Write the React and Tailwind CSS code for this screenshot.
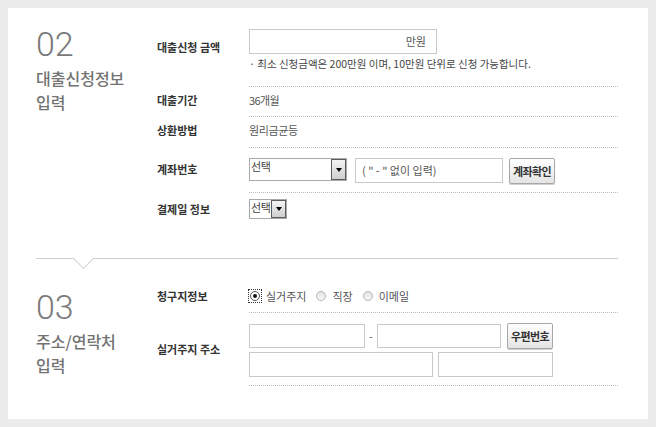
import React from "react";

const ko = { fontFamily: '"Noto Sans CJK KR", "Noto Sans", sans-serif' };
const num = { fontFamily: 'Roboto, "Liberation Sans", sans-serif' };

function Select({ w, h, className = "" }) {
  return (
    <div className={`relative flex bg-white border border-[#a9a9a9] ${className}`} style={{ width: w, height: h }}>
      <span className="pl-[1px] leading-[14px] text-[11px] tracking-[-0.3px] text-[#444]">선택</span>
      <span className="absolute right-0 top-0 bottom-0 w-[15px] flex items-center justify-center border border-[#5c5c5c] bg-gradient-to-b from-[#f4f4f4] to-[#cfcfcf]">
        <span className="w-0 h-0 border-l-[3px] border-r-[3px] border-t-[4px] border-l-transparent border-r-transparent border-t-black" />
      </span>
    </div>
  );
}

function Btn({ children, w, h }) {
  return (
    <button
      className="flex items-center justify-center rounded-[2px] border border-[#a7a7a7] bg-gradient-to-b from-white to-[#e4e4e4] text-[11px] font-bold tracking-[-0.6px] text-[#333] shadow-[0_1px_0_#d0d0d0]"
      style={{ width: w, height: h }}
    >
      {children}
    </button>
  );
}

function Radio({ checked }) {
  return (
    <span className={`flex items-center justify-center w-[12px] h-[12px] ${checked ? "outline outline-1 outline-dotted outline-[#333]" : ""}`}>
      <span className={`flex items-center justify-center w-[10px] h-[10px] rounded-full border ${checked ? "border-[#555] bg-white" : "border-[#b5b5b5] bg-gradient-to-b from-[#e2e2e2] to-[#f8f8f8]"}`}>
        {checked && <span className="w-[4px] h-[4px] rounded-full bg-[#111]" />}
      </span>
    </span>
  );
}

const Label = ({ children, className = "" }) => (
  <div className={`text-[11px] font-bold leading-[14px] text-[#333] ${className}`}>{children}</div>
);

const Cell = ({ children, className = "", last }) => (
  <div className={`${last ? "" : "border-b border-dotted border-[#bdbdbd]"} ${className}`}>{children}</div>
);

function Heading({ n, lines }) {
  return (
    <div className="w-[121px] shrink-0">
      <div className="text-[34px] font-light leading-[32px] text-[#7a7a7a]" style={num}>{n}</div>
      <div className="mt-[6px] text-[16px] font-medium leading-[24px] text-[#727272]">
        {lines.map(l => <div key={l}>{l}</div>)}
      </div>
    </div>
  );
}

export default function App() {
  return (
    <div className="w-[656px] h-[427px] bg-[#ececec] p-[8px]" style={ko}>
      <div className="h-[411px] bg-white pl-[28px] pr-[30px]">
        {/* 02 */}
        <div className="flex pt-[20px]">
          <Heading n="02" lines={["대출신청정보", "입력"]} />
          <div className="flex-1 grid grid-cols-[92px_1fr] mt-[1px]">
            <Label className="pt-[11px]">대출신청 금액</Label>
            <Cell className="pb-[15px]">
              <div className="w-[188px] h-[25px] border border-[#c9c9c9] flex items-center justify-end pr-[10px] text-[11px] text-[#555]">만원</div>
              <div className="mt-[3px] text-[10.5px] leading-[14px] text-[#444]">· 최소 신청금액은 200만원 이며, 10만원 단위로 신청 가능합니다.</div>
            </Cell>

            <Label className="pt-[6px]">대출기간</Label>
            <Cell className="pt-[6px] pb-[9px]">
              <div className="text-[11px] leading-[14px] tracking-[-0.6px] text-[#555]">36개월</div>
            </Cell>

            <Label className="pt-[6px]">상환방법</Label>
            <Cell className="pt-[6px] pb-[10px]">
              <div className="text-[11px] leading-[14px] tracking-[-0.4px] text-[#555]">원리금균등</div>
            </Cell>

            <Label className="pt-[14px]">계좌번호</Label>
            <Cell className="pt-[10px] pb-[8px]">
              <div className="flex items-start">
                <Select w={98} h={23} />
                <div className="ml-[8px] w-[148px] h-[25px] border border-[#c9c9c9] flex items-center pl-[6px] text-[11px] text-[#555]">( " - " 없이 입력)</div>
                <div className="ml-[6px]"><Btn w={46} h={26}>계좌확인</Btn></div>
              </div>
            </Cell>

            <Label className="pt-[9px]">결제일 정보</Label>
            <Cell last className="pt-[6px]">
              <Select w={38} h={20} />
            </Cell>
          </div>
        </div>

        {/* divider */}
        <div className="relative mt-[39px] h-px bg-[#cfcfcf]">
          <span className="absolute left-[40px] top-[-7px] w-[15px] h-[15px] rotate-45 bg-white border-r border-b border-[#cfcfcf]" />
        </div>

        {/* 03 */}
        <div className="flex pt-[28px]">
          <div className="mt-[4px]"><Heading n="03" lines={["주소/연락처", "입력"]} /></div>
          <div className="flex-1 grid grid-cols-[92px_1fr]">
            <Label className="leading-[18px]">청구지정보</Label>
            <Cell className="pb-[7px]">
              <div className="h-[18px] flex items-center text-[11px] text-[#555]">
                <Radio checked />
                <span className="ml-[5px]">실거주지</span>
                <span className="ml-[9px]"><Radio /></span>
                <span className="ml-[5px]">직장</span>
                <span className="ml-[9px]"><Radio /></span>
                <span className="ml-[5px]">이메일</span>
              </div>
            </Cell>

            <Label className="pt-[29px]">실거주지 주소</Label>
            <Cell className="pt-[11px] pb-[8px]">
              <div className="flex items-center h-[24px]">
                <div className="w-[116px] h-[24px] border border-[#c9c9c9]" />
                <span className="w-[12px] text-center text-[11px] text-[#555]">-</span>
                <div className="w-[124px] h-[24px] border border-[#c9c9c9]" />
                <div className="ml-[6px]"><Btn w={46} h={26}>우편번호</Btn></div>
              </div>
              <div className="flex mt-[4px]">
                <div className="w-[184px] h-[25px] border border-[#c9c9c9]" />
                <div className="ml-[5px] w-[115px] h-[25px] border border-[#c9c9c9]" />
              </div>
            </Cell>
          </div>
        </div>
      </div>
    </div>
  );
}
